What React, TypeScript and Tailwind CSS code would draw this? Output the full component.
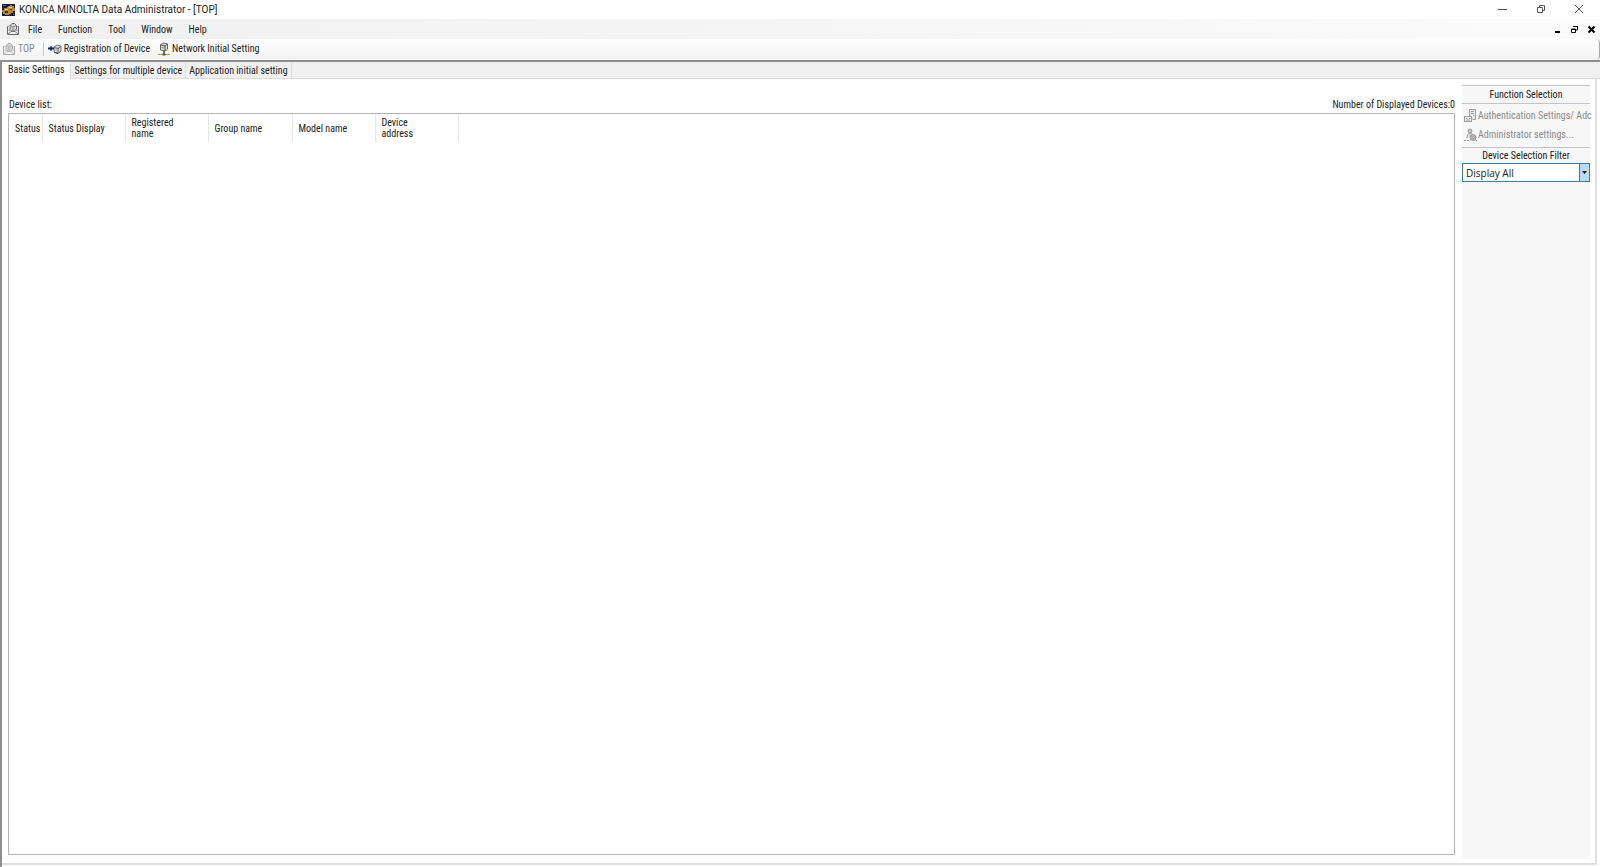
import React from "react"

const menus = ["File", "Function", "Tool", "Window", "Help"]

const columns = [
  { label: "Status", width: "w-[33px]" },
  { label: "Status Display", width: "w-[83px]" },
  { label: "Registered name", width: "w-[83px]" },
  { label: "Group name", width: "w-[84px]" },
  { label: "Model name", width: "w-[83px]" },
  { label: "Device address", width: "w-[83px]" },
]

function AppIcon() {
  return (
    <svg width="13" height="12" viewBox="0 0 13 12" aria-hidden="true">
      <rect width="13" height="12" fill="#171d3d" />
      <path d="M6 2h2V1h2v1h2v2h1v3h-2v2H9v1H7v1H3v-1H1V8H0V6h2V4h3V3h1z" fill="#b98535" />
      <path d="M7 3h3v1H7zM3 5h3v1H3z" fill="#f0d090" />
      <path d="M3 7h3v2H3zM8 5h2v1H8z" fill="#4a3014" />
      <path d="M1 1h3v1H1zM11 10h1v1h-1z" fill="#4a64b0" />
    </svg>
  )
}

function TopIcon({ color, className }: { color: string; className?: string }) {
  return (
    <svg width="14" height="14" viewBox="0 0 14 14" fill="none" stroke={color} className={className} aria-hidden="true">
      <path d="M2.500 4.500h-1v8h11v-8h-1" />
      <path d="M4 3.500 6 1.500h2.500l2 2v3.500L8.500 9H5.500L4 7.500z" fill="#d6d6d6" />
      <path d="M4.500 3.500 7 5l3-1.500M7 5v3.500" strokeOpacity=".7" />
      <path d="M2 12l3-2.500h4l3 2.500" strokeOpacity=".8" />
      <path d="M1.500 7.500 4 9M12.500 7.500 10 9" strokeOpacity=".6" />
    </svg>
  )
}

function RegisterIcon() {
  return (
    <svg width="14" height="12" viewBox="0 0 14 12" fill="none" aria-hidden="true">
      <path d="M6 4 9 2l4 1v5l-3 2.500L6 9z" fill="#cfd2d8" stroke="#777" />
      <path d="M6 4.500l4 1 3-2M10 5.500v4.500" stroke="#666" />
      <path d="M6.500 9.500 10 10.500" stroke="#222a55" />
      <path d="M0 5.500h6M3 3.500v4" stroke="#1d2a6b" strokeWidth="2" />
    </svg>
  )
}

function NetworkIcon() {
  return (
    <svg width="12" height="14" viewBox="0 0 12 14" fill="none" aria-hidden="true">
      <path d="M2.500 2.500 5 1l4.500 1v5L7.500 9l-5-1z" fill="#dcdcdc" stroke="#666" />
      <path d="M2.500 3 7 4l2.500-2M7 4v5" stroke="#555" />
      <path d="M3.500 5.500 6 6" stroke="#888" />
      <path d="M6 9v3" stroke="#8a6d1a" strokeWidth="2" />
      <path d="M0 12.500h12" stroke="#c9a227" />
      <path d="M4.500 12.500h3" stroke="#555" strokeWidth="2" />
    </svg>
  )
}

function AuthIcon() {
  return (
    <svg width="13" height="14" viewBox="0 0 13 14" fill="none" stroke="#a0a0a0" className="shrink-0" aria-hidden="true">
      <path d="M5.500 7V.5h6v10h-3" fill="#e8e8e8" />
      <path d="M7 2.500h3M7 4.500h3M9 6.500h1" />
      <rect x=".5" y="7.500" width="7" height="5" fill="#f2f2f2" />
      <path d="M2 9.500h1.500M5 9.500h1.500M2 11h4" />
    </svg>
  )
}

function AdminIcon() {
  return (
    <svg width="13" height="14" viewBox="0 0 13 14" fill="none" stroke="#999" className="shrink-0" aria-hidden="true">
      <circle cx="6" cy="3" r="2" fill="#c8c8c8" />
      <path d="M3 10c0-3 1-4.500 3-4.500s3 .5 3 2" fill="#ddd" />
      <circle cx="9" cy="9.500" r="3" fill="#b8b8b8" />
      <circle cx="9" cy="9.500" r="1" fill="#f7f7f7" />
      <path d="M0 12.500h2M3 12.500h2M11.500 12.500H13" />
    </svg>
  )
}

function TitleBar() {
  return (
    <header className="flex h-[19px] items-center justify-between bg-white pl-0.5">
      <div className="flex items-center gap-1">
        <AppIcon />
        <h1 className="font-[Roboto,sans-serif] text-[10px] leading-4">
          KONICA MINOLTA Data Administrator - [TOP]
        </h1>
      </div>
      <div className="flex items-center gap-7 pb-0.5 pr-4 text-[#555]">
        <button type="button" aria-label="Minimize">
          <svg width="10" height="10" viewBox="0 0 10 10" stroke="currentColor"><path d="M0 5.500h9" /></svg>
        </button>
        <button type="button" aria-label="Restore">
          <svg width="10" height="10" viewBox="0 0 10 10" fill="none" stroke="currentColor">
            <path d="M1.500 3.500h5v5h-5zM3.500 3V1.500h5v5H7" />
          </svg>
        </button>
        <button type="button" aria-label="Close">
          <svg width="10" height="10" viewBox="0 0 10 10" stroke="currentColor"><path d="M1 1l8 8M9 1L1 9" /></svg>
        </button>
      </div>
    </header>
  )
}

function MenuBar() {
  return (
    <nav className="flex h-5 items-center justify-between bg-gradient-to-r from-[#f0f0f0] to-[#fbfbfb] pl-1.5">
      <div className="flex items-center">
        <TopIcon color="#666" className="mr-2" />
        <div className="flex items-center gap-4 pt-px">
          {menus.map((menu) => (
            <button key={menu} type="button">{menu}</button>
          ))}
        </div>
      </div>
      <div className="flex items-center gap-2 pr-1 text-black">
        <button type="button" aria-label="Minimize TOP">
          <svg width="9" height="9" viewBox="0 0 9 9" stroke="currentColor" strokeWidth="2"><path d="M2 7h5" /></svg>
        </button>
        <button type="button" aria-label="Restore TOP">
          <svg width="9" height="9" viewBox="0 0 9 9" fill="none" stroke="currentColor">
            <path d="M1.500 4v3.500h4V4zM3.500 2v-.5h4V5H6" />
            <path d="M1 4.500h5M3 1.500h5" />
          </svg>
        </button>
        <button type="button" aria-label="Close TOP">
          <svg width="9" height="9" viewBox="0 0 9 9" stroke="currentColor" strokeWidth="2"><path d="M1.500 1.500l6 6M7.500 1.500l-6 6" /></svg>
        </button>
      </div>
    </nav>
  )
}

function Toolbar() {
  return (
    <div className="flex h-[21px] items-center rounded-r-sm border-r border-[#aaa] bg-gradient-to-b from-[#fdfdfd] to-[#f3f3f3] pb-px pl-0.5">
      <button type="button" disabled className="flex items-center gap-0.5 text-[#8a8a8a]">
        <TopIcon color="#aaa" />
        TOP
      </button>
      <span className="ml-2 mr-1 h-3.5 w-px bg-[#c8c8c8]" />
      <button type="button" className="flex items-center gap-0.5">
        <RegisterIcon />
        Registration of Device
      </button>
      <button type="button" className="ml-2 flex items-center gap-0.5">
        <NetworkIcon />
        Network Initial Setting
      </button>
    </div>
  )
}

function Tabs() {
  return (
    <div role="tablist" className="flex h-[17px] items-end bg-[#f0f0f0]">
      <button type="button" role="tab" aria-selected="true" className="h-full bg-white px-1.5 pb-0.5">
        Basic Settings
      </button>
      <div className="flex h-4 flex-1 border-b border-[#dcdcdc]">
        <button type="button" role="tab" aria-selected="false" className="border-x border-[#dcdcdc] px-[3px] pt-px">
          Settings for multiple device
        </button>
        <button type="button" role="tab" aria-selected="false" className="border-r border-[#dcdcdc] px-[3px] pt-px">
          Application initial setting
        </button>
      </div>
    </div>
  )
}

function DeviceList() {
  return (
    <section className="flex flex-1 flex-col pt-4">
      <div className="flex h-4 items-center justify-between pl-px">
        <h2>Device list:</h2>
        <p>Number of Displayed Devices:0</p>
      </div>
      <div className="flex-1 border border-[#b4b4b4] bg-white">
        <table className="border-collapse">
          <thead>
            <tr className="h-7">
              {columns.map((col) => (
                <th
                  key={col.label}
                  scope="col"
                  className={`${col.width} border-r border-[#e6e6e6] p-0 pl-1.5 text-left align-middle font-normal leading-[11px] last:pr-8 [&:nth-child(3)]:pr-6`}
                >
                  {col.label}
                </th>
              ))}
            </tr>
          </thead>
          <tbody />
        </table>
      </div>
    </section>
  )
}

function Sidebar() {
  return (
    <aside className="w-32 bg-[#f7f7f7]">
      <h2 className="mt-px h-[19px] border-y border-[#c4c4c4] text-center leading-[17px]">Function Selection</h2>
      <div className="flex flex-col pb-[3px] pt-0.5 text-[#8a8a8a]">
        <button type="button" disabled className="flex h-[19px] items-center gap-px whitespace-nowrap pl-0.5">
          <AuthIcon />
          Authentication Settings/ Adc
        </button>
        <button type="button" disabled className="flex h-[19px] items-center gap-px whitespace-nowrap pl-0.5">
          <AdminIcon />
          Administrator settings...
        </button>
      </div>
      <label htmlFor="filter" className="block border-t border-[#c4c4c4] pt-px text-center leading-[14px]">
        Device Selection Filter
      </label>
      <div className="relative">
        <select
          id="filter"
          className="block h-[19px] w-full appearance-none rounded-none border border-[#3c7f9c] bg-white pl-[3px] font-['Open_Sans','Noto_Sans',sans-serif] text-[10px] leading-4 outline-none"
        >
          <option>Display All</option>
        </select>
        <span className="pointer-events-none absolute inset-y-0 right-0 flex w-[11px] items-center justify-center border border-[#3c7f9c] bg-[#b9dcf2]">
          <svg width="5" height="3" viewBox="0 0 5 3" aria-hidden="true"><path d="M0 0h5L2.500 3z" fill="#111" /></svg>
        </span>
      </div>
    </aside>
  )
}

export default function App() {
  return (
    <div className="flex min-h-screen flex-col bg-white font-['Roboto_Condensed','Liberation_Sans',sans-serif] text-[10px] leading-[14px] text-[#222]">
      <TitleBar />
      <MenuBar />
      <Toolbar />
      <main className="flex flex-1 flex-col border-l-2 border-t-2 border-[#8f8f8f]">
        <Tabs />
        <div className="mr-[3px] flex flex-1 gap-[7px] border-b-2 border-r-2 border-[#e0e0e0] pb-1 pl-1.5 pr-[5px] pt-[5px]">
          <div className="mb-1 -mt-[3px] flex flex-1">
            <DeviceList />
          </div>
          <Sidebar />
        </div>
        <div className="h-0.5 bg-white" />
      </main>
    </div>
  )
}
